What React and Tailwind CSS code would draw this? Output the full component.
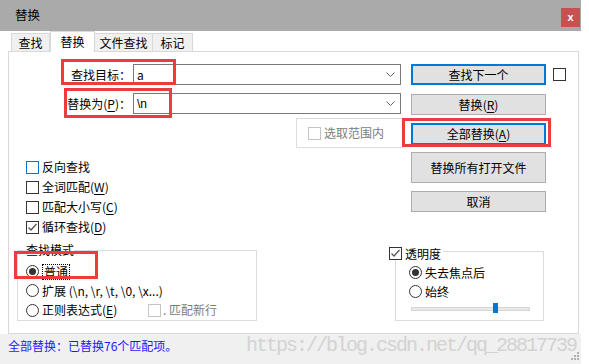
import React from "react";

const Check = ({ checked, focus, disabled }) => (
  <span
    className={`w-[13px] h-[13px] shrink-0 bg-white border flex items-center justify-center ${
      focus ? "border-[#0078d7]" : disabled ? "border-[#c4c4c4]" : "border-[#333333]"
    }`}
  >
    {checked && (
      <svg width="11" height="11" viewBox="0 0 11 11">
        <polyline points="1.5,5.5 4,8 9.5,2" fill="none" stroke="#555" strokeWidth="1.3" />
      </svg>
    )}
  </span>
);

const Radio = ({ checked }) => (
  <span className="w-[13px] h-[13px] shrink-0 rounded-full bg-white border border-[#333333] flex items-center justify-center">
    {checked && <span className="w-[7px] h-[7px] rounded-full bg-[#333333]" />}
  </span>
);

const Btn = ({ children, focus, h }) => (
  <div
    className={`w-[135px] ${h} bg-[#e1e1e1] flex items-center justify-center ${
      focus ? "border-2 border-[#0078d7]" : "border border-[#adadad]"
    }`}
  >
    {children}
  </div>
);

const Key = ({ k }) => (
  <span>
    (<span className="underline underline-offset-2">{k}</span>)
  </span>
);

const Chevron = () => (
  <svg width="9" height="5" viewBox="0 0 9 5" className="ml-auto mr-[5px]">
    <polyline points="0.5,0.5 4.5,4.5 8.5,0.5" fill="none" stroke="#666" strokeWidth="1" />
  </svg>
);

const Mark = ({ className }) => (
  <div className={`absolute border-[3px] border-[#ee3b3b] pointer-events-none ${className}`} />
);

export default function App() {
  return (
    <div className="relative w-[589px] h-[364px] overflow-hidden bg-white text-black text-[12px] leading-none font-['Noto_Sans_CJK_SC','Liberation_Sans',sans-serif]">
      <div className="w-[581px] flex flex-col">
        {/* title bar */}
        <div className="h-[31px] bg-[#aaaaaa] flex items-start justify-between">
          <span className="ml-[15px] mt-[9px] text-[12.5px]">替换</span>
          <div className="mt-[8px] mr-[1px] w-[19px] h-[19px] bg-[#c75050] text-white flex items-center justify-center text-[11px] font-bold font-['Liberation_Sans',sans-serif]">
            x
          </div>
        </div>

        {/* tabs */}
        <div className="h-[20px] pl-[11px] flex items-end">
          <div className="w-[39px] h-[18px] bg-[#f0f0f0] border border-b-0 border-[#d9d9d9] flex items-center justify-center">
            查找
          </div>
          <div className="relative z-10 -mb-[1px] w-[45px] h-[21px] bg-white border border-b-0 border-[#d9d9d9] flex items-center justify-center pb-[1px]">
            替换
          </div>
          <div className="w-[58px] h-[18px] bg-[#f0f0f0] border border-b-0 border-l-0 border-[#d9d9d9] flex items-center justify-center">
            文件查找
          </div>
          <div className="w-[40px] h-[18px] bg-[#f0f0f0] border border-b-0 border-l-0 border-[#d9d9d9] flex items-center justify-center">
            标记
          </div>
        </div>

        {/* panel */}
        <div className="ml-[8px] w-[571px] h-[283px] border border-[#d9d9d9] bg-white flex flex-col">
          <div className="h-[190px] flex">
            {/* left column */}
            <div className="w-[394px] flex flex-col">
              <div className="mt-[12px] h-[21px] flex">
                <div className="w-[124px] flex items-center justify-end pr-[2px]">查找目标：</div>
                <div className="w-[268px] h-[21px] border border-[#7a7a7a] flex items-center pl-[3px]">
                  <span>a</span>
                  <Chevron />
                </div>
              </div>
              <div className="mt-[8px] h-[21px] flex">
                <div className="w-[124px] flex items-center justify-end pr-[2px]">
                  替换为<Key k="P" />：
                </div>
                <div className="w-[268px] h-[21px] border border-[#7a7a7a] flex items-center pl-[3px]">
                  <span className="font-['Liberation_Sans',sans-serif]">\n</span>
                  <Chevron />
                </div>
              </div>
              <div className="mt-[4px] ml-[287px] w-[107px] h-[30px] border border-[#dcdcdc] flex items-center pl-[11px] gap-[3px] text-[#7d7d7d]">
                <Check disabled />
                <span>选取范围内</span>
              </div>
              <div className="mt-[9px] ml-[17px] flex flex-col">
                <div className="h-[20px] flex items-center gap-[3px]">
                  <Check focus />
                  <span>反向查找</span>
                </div>
                <div className="h-[20px] flex items-center gap-[3px]">
                  <Check />
                  <span>
                    全词匹配<Key k="W" />
                  </span>
                </div>
                <div className="h-[20px] flex items-center gap-[3px]">
                  <Check />
                  <span>
                    匹配大小写<Key k="C" />
                  </span>
                </div>
                <div className="h-[20px] flex items-center gap-[3px]">
                  <Check checked />
                  <span>
                    循环查找<Key k="D" />
                  </span>
                </div>
              </div>
            </div>

            {/* right column */}
            <div className="ml-[8px] flex flex-col">
              <div className="mt-[12px] flex items-center gap-[7px]">
                <Btn focus h="h-[21px]">查找下一个</Btn>
                <Check />
              </div>
              <div className="mt-[9px]">
                <Btn h="h-[21px]">
                  替换<Key k="R" />
                </Btn>
              </div>
              <div className="mt-[8px]">
                <Btn focus h="h-[22px]">
                  全部替换<Key k="A" />
                </Btn>
              </div>
              <div className="mt-[7px]">
                <Btn h="h-[31px]">替换所有打开文件</Btn>
              </div>
              <div className="mt-[8px]">
                <Btn h="h-[21px]">取消</Btn>
              </div>
            </div>
          </div>

          {/* bottom groups */}
          <div className="mt-[8px] flex items-start">
            <div className="relative ml-[8px] w-[240px] h-[71px] border border-[#dcdcdc] flex flex-col">
              <span className="absolute -top-[7px] left-[8px] bg-white">查找模式</span>
              <div className="mt-[11px] ml-[8px] h-[19px] flex items-center gap-[3px]">
                <Radio checked />
                <span className="border border-dotted border-black px-[1px] py-[1px]">普通</span>
              </div>
              <div className="ml-[8px] h-[19px] flex items-center gap-[3px]">
                <Radio />
                <span>扩展 (\n, \r, \t, \0, \x...)</span>
              </div>
              <div className="ml-[8px] h-[20px] flex items-center">
                <div className="w-[122px] flex items-center gap-[3px]">
                  <Radio />
                  <span>
                    正则表达式<Key k="E" />
                  </span>
                </div>
                <Check disabled />
                <span className="ml-[2px] text-[#7d7d7d]">. 匹配新行</span>
              </div>
            </div>

            <div className="relative mt-[1px] ml-[138px] w-[149px] h-[70px] border border-[#dcdcdc] flex flex-col">
              <div className="absolute -top-[5px] -left-[7px] bg-white pr-[2px] flex items-center gap-[3px]">
                <Check checked />
                <span>透明度</span>
              </div>
              <div className="mt-[11px] ml-[13px] h-[19px] flex items-center gap-[3px]">
                <Radio checked />
                <span>失去焦点后</span>
              </div>
              <div className="ml-[13px] h-[19px] flex items-center gap-[3px]">
                <Radio />
                <span>始终</span>
              </div>
              <div className="relative mt-[6px] ml-[15px] w-[119px] h-[4px] bg-[#e7eaea] border border-[#d6d6d6]">
                <div className="absolute -top-[5px] left-[81px] w-[5px] h-[10px] bg-[#0078d7]" />
              </div>
            </div>
          </div>
        </div>

        {/* status bar */}
        <div className="h-[30px] bg-[#f0f0f0] flex justify-between">
          <span className="ml-[8px] mt-[6px] text-[#1a1aff]">全部替换：已替换76个匹配项。</span>
          <svg width="8" height="8" viewBox="0 0 8 8" className="self-end mb-[4px] mr-[2px]">
            <rect x="6" y="0" width="2" height="2" fill="#b0b0b0" />
            <rect x="3" y="3" width="2" height="2" fill="#b0b0b0" />
            <rect x="6" y="3" width="2" height="2" fill="#b0b0b0" />
            <rect x="0" y="6" width="2" height="2" fill="#b0b0b0" />
            <rect x="3" y="6" width="2" height="2" fill="#b0b0b0" />
            <rect x="6" y="6" width="2" height="2" fill="#b0b0b0" />
          </svg>
        </div>
      </div>

      {/* watermark */}
      <span className="absolute left-[246px] top-[332px] text-[20px] tracking-[-2px] leading-[28px] text-[#d3d3d3] font-['Liberation_Mono',monospace] pointer-events-none">
        https://blog.csdn.net/qq_28817739
      </span>

      {/* red annotation boxes */}
      <Mark className="left-[61px] top-[59px] w-[115px] h-[26px]" />
      <Mark className="left-[64px] top-[88px] w-[108px] h-[30px]" />
      <Mark className="left-[402px] top-[118px] w-[149px] h-[29px]" />
      <Mark className="left-[14px] top-[251px] w-[84px] h-[28px]" />
    </div>
  );
}
